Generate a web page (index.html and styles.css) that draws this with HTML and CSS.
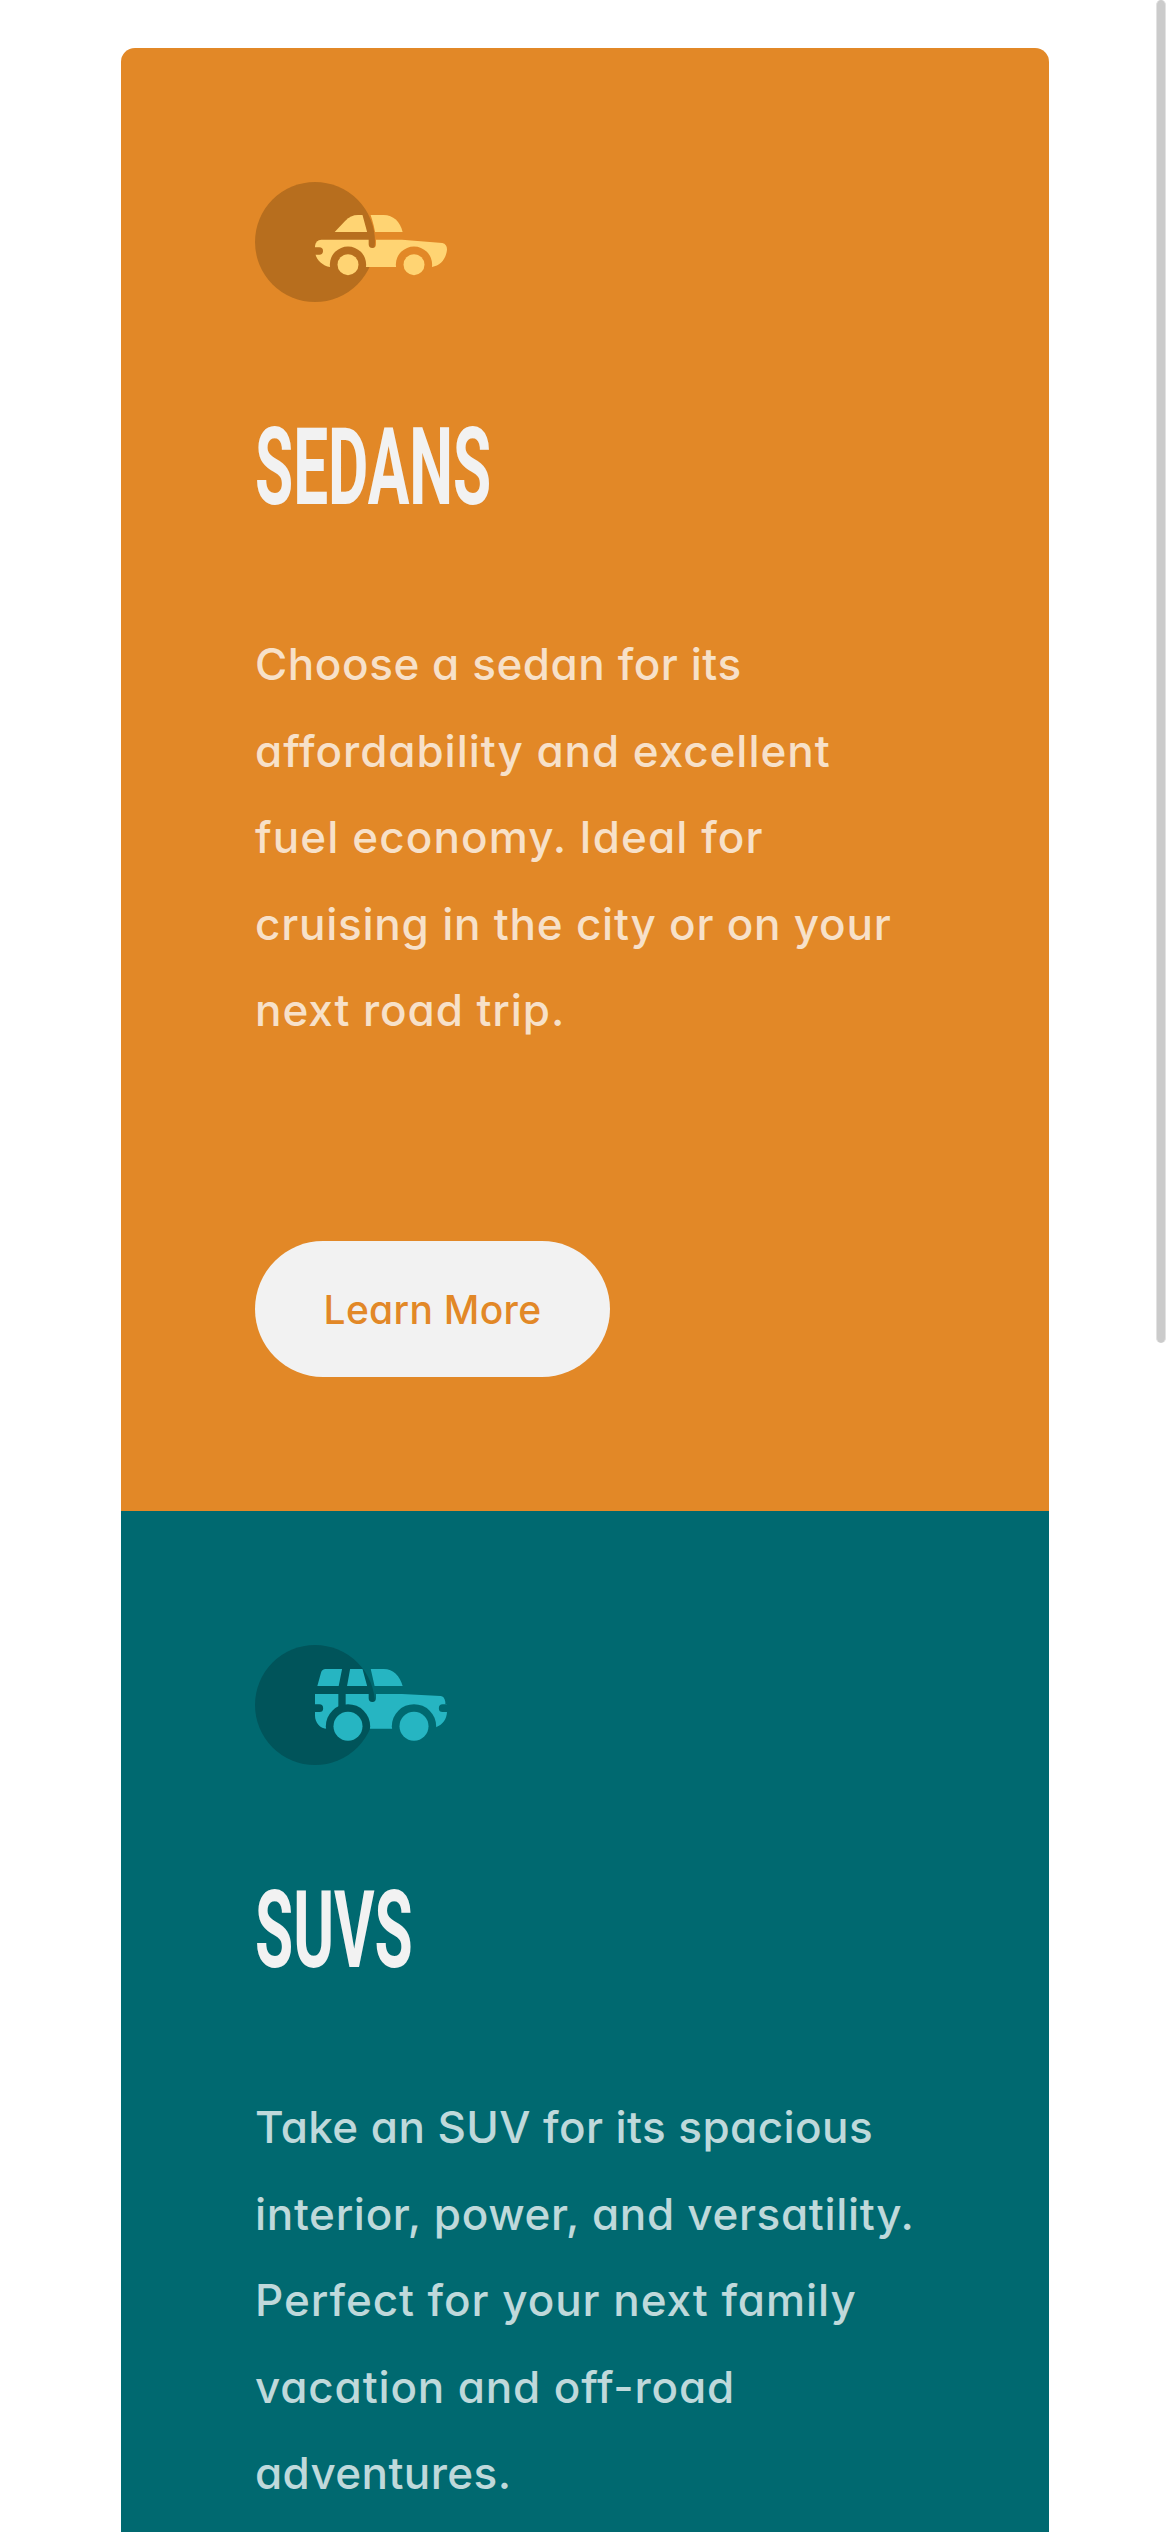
FILE: index.html
```html
<!DOCTYPE html>
<html lang="en">
<head>
<meta charset="utf-8">
<title>Car types</title>
<link rel="stylesheet" href="styles.css">
</head>
<body>
<main class="cards">
  <section class="card sedans">
    <svg class="icon" viewBox="45 36 576 360" aria-hidden="true">
      <circle class="disc" cx="225" cy="216" r="180"/>
      <mask id="sedan-cut" maskUnits="userSpaceOnUse" x="45" y="36" width="576" height="360">
        <rect x="45" y="36" width="576" height="360" fill="#fff"/>
        <path d="M220 232H238A11 11 0 0 1 238 254H220Z"/>
        <circle cx="324" cy="284" r="54.5"/>
        <circle cx="522" cy="284" r="54.5"/>
        <path d="M366 130L382 188L386 206V223A11 11 0 0 0 408 223V205C405 180 399 155 390 130Z"/>
      </mask>
      <g class="car">
        <g mask="url(#sedan-cut)">
          <path d="M284 186L316 152Q332 135 354 135H431C460 135 480 155 488 186Z"/>
          <path d="M225 228Q227 210 244 209H486L607 219Q621 222 621 239C618 268 601 286 576 291H270C245 287 225 266 225 242Z"/>
        </g>
        <circle cx="324" cy="284" r="31.5"/>
        <circle cx="522" cy="284" r="31.5"/>
      </g>
    </svg>
    <h2 class="title">SEDANS</h2>
    <p class="text">
      <span>Choose a sedan for its</span>
      <span>affordability and excellent</span>
      <span>fuel economy. Ideal for</span>
      <span>cruising in the city or on your</span>
      <span>next road trip.</span>
    </p>
    <a class="button" href="#">Learn More</a>
  </section>
  <section class="card suvs">
    <svg class="icon" viewBox="45 36 576 360" aria-hidden="true">
      <circle class="disc" cx="225" cy="216" r="180"/>
      <mask id="suv-cut" maskUnits="userSpaceOnUse" x="45" y="36" width="576" height="360">
        <rect x="45" y="36" width="576" height="360" fill="#fff"/>
        <path d="M220 214H238A11.5 11.5 0 0 1 238 237H220ZM626 214H608A11.5 11.5 0 0 0 608 237H626Z"/>
        <circle cx="324" cy="280" r="66.5"/>
        <circle cx="522" cy="280" r="66.5"/>
        <path d="M307 104L295 164V224H317V182L331 104Z"/>
        <path d="M366 103L382 161L386 180V196A11 11 0 0 0 408 196V178L391 103Z"/>
      </mask>
      <g class="car">
        <g mask="url(#suv-cut)">
          <path d="M232 159L243 119Q246 108 257 108H431C460 108 480 129 488 159Z"/>
          <path d="M225 183H486L602 189Q613 189 616 207V214H621V237C620 258 609 274 588 283L570 287H262C240 287 225 268 225 248Z"/>
        </g>
        <circle cx="324" cy="280" r="43.5"/>
        <circle cx="522" cy="280" r="43.5"/>
      </g>
    </svg>
    <h2 class="title">SUVS</h2>
    <p class="text">
      <span>Take an SUV for its spacious</span>
      <span>interior, power, and versatility.</span>
      <span>Perfect for your next family</span>
      <span>vacation and off-road</span>
      <span>adventures.</span>
    </p>
  </section>
</main>
<div class="scrollbar"></div>
</body>
</html>
```
FILE: styles.css
```css
html {
  height: 100%;
}

body {
  box-sizing: border-box;
  height: 100%;
  margin: 0;
  padding: 48px 0 0 121px;
  background: #fff;
  font-family: Inter, sans-serif;
  font-feature-settings: "cv11";
}

.cards {
  display: flex;
  flex-direction: column;
  width: 928px;
  height: 100%;
  border-radius: 14px 14px 0 0;
  overflow: hidden;
}

.card {
  display: flex;
  flex-direction: column;
  align-items: flex-start;
  box-sizing: border-box;
  padding: 134px 134px 0;
}

.sedans {
  flex: 0 0 1463px;
  padding-bottom: 134px;
  background: #e28827;
  --disc: #b76e1e;
  --car: #ffd473;
  --accent: #e28827;
}

.suvs {
  flex: 1;
  background: #006970;
  --disc: #00545a;
  --car: #26b5c2;
}

.icon {
  display: block;
  flex: none;
  width: 192px;
  height: 120px;
}

.disc {
  fill: var(--disc);
}

.car {
  fill: var(--car);
}

.title {
  margin: 100px 0 0;
  color: #f2f2f2;
  font: 700 108px/130px Roboto, sans-serif;
  transform: scaleX(0.574);
  transform-origin: left;
}

.text {
  margin: 89px 0 0;
  color: rgba(255, 255, 255, 0.75);
  font-size: 44px;
  font-weight: 500;
  line-height: 86.5px;
  white-space: nowrap;
}

.text span {
  display: block;
}

.sedans span:nth-child(1) { letter-spacing: 0.56px; }
.sedans span:nth-child(2) { letter-spacing: 0.95px; }
.sedans span:nth-child(3) { letter-spacing: 1.1px; }
.sedans span:nth-child(4) { letter-spacing: 0.77px; }
.sedans span:nth-child(5) { letter-spacing: 0.92px; }
.suvs span:nth-child(1) { letter-spacing: 0.42px; }
.suvs span:nth-child(2) { letter-spacing: 0.67px; }
.suvs span:nth-child(3) { letter-spacing: 0.95px; }
.suvs span:nth-child(4) { letter-spacing: 0.85px; }
.suvs span:nth-child(5) { letter-spacing: 0.4px; }

.button {
  display: flex;
  align-items: center;
  justify-content: center;
  width: 355px;
  height: 136px;
  margin-top: auto;
  border-radius: 68px;
  background: #f2f2f2;
  color: var(--accent);
  font-size: 39px;
  font-weight: 500;
  letter-spacing: 0.3px;
  text-decoration: none;
}

.scrollbar {
  position: fixed;
  top: 0;
  right: 4px;
  width: 10px;
  height: 1343px;
  box-sizing: border-box;
  border: 1px solid #e2e2e2;
  border-width: 0 1px;
  border-radius: 5px;
  background: #cbcbcb;
}
```
